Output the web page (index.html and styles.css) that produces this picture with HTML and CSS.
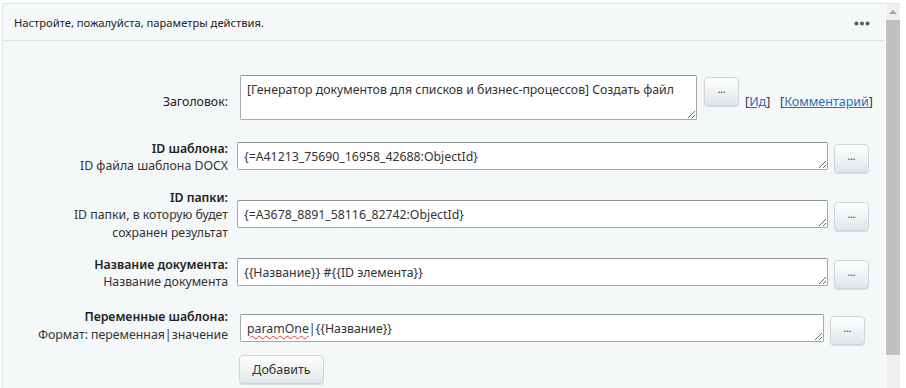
FILE: index.html
```html
<!DOCTYPE html>
<html lang="ru">
<head>
<meta charset="utf-8">
<link rel="stylesheet" href="styles.css">
</head>
<body>
<div class="frame">
  <div class="panel">
    <div class="head">
      <span class="head-title">Настройте, пожалуйста, параметры действия.</span>
      <svg class="head-more" width="16" height="5" viewBox="0 0 16 5"><circle cx="2.5" cy="2.5" r="2" fill="#5a5a5a"/><circle cx="8" cy="2.5" r="2" fill="#5a5a5a"/><circle cx="13.5" cy="2.5" r="2" fill="#5a5a5a"/></svg>
    </div>
    <div class="form">
      <div class="row row-title">
        <div class="label"><span class="plain">Заголовок:</span></div>
        <div class="field field-wide">
          <div class="ta ta-title">[Генератор документов для списков и бизнес-процессов] Создать файл</div>
          <button class="dots dots-title">...</button>
          <span class="links">[<a href="#">Ид</a>]&nbsp;&nbsp; [<a href="#">Комментарий</a>]</span>
        </div>
      </div>
      <div class="row row-tpl">
        <div class="label"><b>ID шаблона:</b><br>ID файла шаблона DOCX</div>
        <div class="field">
          <div class="ta">{=A41213_75690_16958_42688:ObjectId}</div>
          <button class="dots">...</button>
        </div>
      </div>
      <div class="row row-dir">
        <div class="label"><b>ID папки:</b><br>ID папки, в которую будет<br>сохранен результат</div>
        <div class="field">
          <div class="ta">{=A3678_8891_58116_82742:ObjectId}</div>
          <button class="dots">...</button>
        </div>
      </div>
      <div class="row row-name">
        <div class="label"><b>Название документа:</b><br>Название документа</div>
        <div class="field">
          <div class="ta">{{Название}} #{{ID элемента}}</div>
          <button class="dots">...</button>
        </div>
      </div>
      <div class="row row-vars">
        <div class="label"><b>Переменные шаблона:</b><br>Формат: переменная|значение</div>
        <div class="field field-wide">
          <div class="ta ta-vars"><span class="typo">paramOne</span>|{{Название}}</div>
          <button class="dots">...</button>
        </div>
      </div>
      <div class="row-add">
        <button class="add">Добавить</button>
      </div>
    </div>
  </div>
  <div class="scrollbar">
    <div class="sb-arrow"></div>
    <div class="sb-thumb"></div>
    <div class="sb-track"></div>
  </div>
</div>
</body>
</html>
```
FILE: styles.css
```css
html, body {
  margin: 0;
  padding: 0;
  background: #ffffff;
}
body {
  font-family: "Noto Sans", "Open Sans", sans-serif;
  color: #222;
  width: 906px;
  height: 388px;
  overflow: hidden;
}
.frame {
  display: flex;
  margin-top: 3px;
  margin-left: 2px;
  height: 385px;
  width: 898px;
  border-top: 1px solid #e1e6e8;
}
.panel {
  flex: 1;
  background: #f5f8f9;
  border-left: 1px solid #e1e6e8;
  overflow: hidden;
}
.head {
  height: 36px;
  border-bottom: 1px solid #dde4e7;
  display: flex;
  align-items: center;
  justify-content: space-between;
  padding: 0 15px 0 11px;
}
.head-title {
  font-size: 11.2px;
  color: #222;
}
.head-more {
  display: block;
  margin-top: 2px;
}
.form {
  padding-top: 19px;
}
.row {
  display: flex;
  align-items: center;
}
.label {
  width: 225px;
  flex: none;
  text-align: right;
  font-size: 12.3px;
  line-height: 17.5px;
  color: #333;
}
.label b {
  font-weight: 600;
  color: #222;
}
.plain {
  color: #222;
}
.field {
  display: flex;
  align-items: center;
  margin-left: 9px;
}
.field-wide {
  margin-left: 12px;
}
.ta {
  box-sizing: border-box;
  width: 591px;
  height: 28px;
  background: #fff;
  border: 1px solid #a6a9ab;
  border-top-color: #8f9294;
  border-radius: 2px;
  padding: 5px 6px;
  font-size: 12.3px;
  line-height: 17px;
  color: #333;
  resize: both;
  overflow: hidden;
  white-space: nowrap;
}
.ta-title {
  width: 457px;
  height: 45px;
  padding-top: 5px;
}
.ta-vars {
  width: 584px;
}
.typo {
  text-decoration: underline wavy #e0332b;
  text-decoration-thickness: 1px;
  text-underline-offset: 2px;
}
.dots {
  box-sizing: border-box;
  width: 35px;
  height: 29px;
  margin-left: 6px;
  margin-top: 4px;
  border: 1px solid #cfd6da;
  border-radius: 4px;
  background: linear-gradient(#ffffff, #dfe6e9);
  box-shadow: 0 1px 1px rgba(0,0,0,0.12);
  font-family: "Noto Sans", sans-serif;
  font-size: 9px;
  font-weight: bold;
  color: #555;
  padding: 0 0 4px;
  letter-spacing: 0;
}
.dots-title {
  margin-left: 7px;
  align-self: flex-start;
  margin-top: 2px;
}
.links {
  align-self: flex-end;
  margin-left: 6px;
  margin-bottom: 10px;
  font-size: 12.5px;
  color: #333;
}
.links a {
  color: #2a6fb8;
  text-decoration: underline;
}
.row-title {
  height: 75px;
}
.row-title .label {
  padding-top: 8px;
}
.row-tpl {
  height: 44px;
}
.row-tpl .field, .row-dir .field, .row-name .field {
  margin-top: -2px;
}
.row-dir {
  height: 72px;
}
.row-name {
  height: 44px;
}
.row-vars {
  height: 46px;
  margin-top: 10px;
}
.row-vars .label {
  margin-top: -5px;
}
.row-add {
  padding-left: 236px;
  margin-top: 4px;
}
.add {
  box-sizing: border-box;
  width: 85px;
  height: 29px;
  border: 1px solid #cfd6da;
  border-radius: 4px;
  background: linear-gradient(#ffffff, #dfe6e9);
  box-shadow: 0 1px 1px rgba(0,0,0,0.12);
  font-family: "Noto Sans", sans-serif;
  font-size: 12.5px;
  color: #333;
  padding: 0;
}
.scrollbar {
  width: 14px;
  margin-left: 1px;
  display: flex;
  flex-direction: column;
  background: #f0f0f0;
}
.sb-arrow {
  height: 16px;
  display: flex;
  justify-content: center;
  align-items: center;
}
.sb-arrow::before {
  content: "";
  width: 0;
  height: 0;
  border-left: 4px solid transparent;
  border-right: 4px solid transparent;
  border-bottom: 4px solid #a3a3a3;
}
.sb-thumb {
  height: 335px;
  background: #c1c1c1;
}
.sb-track {
  flex: 1;
}
```
